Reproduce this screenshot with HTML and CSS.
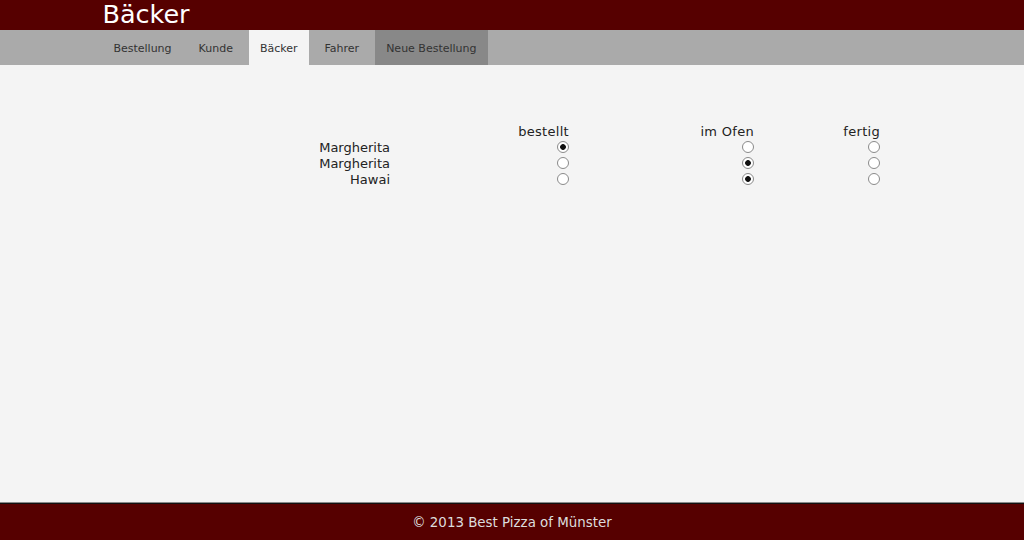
FILE: index.html
```
<!DOCTYPE html>
<html>
<head>
	<title>Bäcker</title>

	<link rel="stylesheet" href="styles.css">
</head>
<body>
	<div class="head">
		<h1>Bäcker</h1>
	</div>
	<div class="nav">
		<a href="#" class="tab">Bestellung</a>
		<a href="#" class="tab">Kunde</a>
		<a href="#" class="tab active">Bäcker</a>
		<a href="#" class="tab">Fahrer</a>
		<a href="#" class="tab new">Neue Bestellung</a>
	</div>
	<div class="main">
		<table class="orders">
			<tr>
				<th class="name"></th>
				<th class="c1">bestellt</th>
				<th class="c2">im Ofen</th>
				<th class="c3">fertig</th>
			</tr>
			<tr>
				<td>Margherita</td>
				<td><input type="radio" name="p1" value="bestellt" checked></td>
				<td><input type="radio" name="p1" value="ofen"></td>
				<td><input type="radio" name="p1" value="fertig"></td>
			</tr>
			<tr>
				<td>Margherita</td>
				<td><input type="radio" name="p2" value="bestellt"></td>
				<td><input type="radio" name="p2" value="ofen" checked></td>
				<td><input type="radio" name="p2" value="fertig"></td>
			</tr>
			<tr>
				<td>Hawai</td>
				<td><input type="radio" name="p3" value="bestellt"></td>
				<td><input type="radio" name="p3" value="ofen" checked></td>
				<td><input type="radio" name="p3" value="fertig"></td>
			</tr>
		</table>
	</div>
	<div class="footer">
		&copy; 2013 Best Pizza of Münster
	</div>
</body>
</html>
```
FILE: styles.css
```
html, body{
	height: 100%;
}
body{
	margin: 0;
	background: #f4f4f4;
	font-family: "DejaVu Sans", Verdana, sans-serif;
	color: #222;
	display: flex;
	flex-direction: column;
}
.head{
	background: #560000;
	height: 30px;
	padding: 0 10%;
}
.head h1{
	margin: 0;
	color: white;
	font-weight: normal;
	font-size: 25.5px;
	line-height: 30px;
	position: relative;
	top: -1px;
}
.nav{
	background: #aaaaaa;
	height: 35px;
	padding: 0 10%;
	display: flex;
	gap: 5px;
}
a{
	text-decoration: none;
}
a.tab{
	color: #333;
	font-size: 11px;
	line-height: 37px;
	padding: 0 11px;
}
a.active{
	background: #f4f4f4;
}
a.new{
	background: #888888;
}
.main{
	flex: 1;
	padding-top: 59px;
}
.orders{
	border-collapse: collapse;
	margin-left: 102px;
	font-size: 13px;
}
.orders th, .orders td{
	padding: 0;
	text-align: right;
	font-weight: normal;
	line-height: 16px;
	height: 16px;
}
.orders th{
	letter-spacing: 0.3px;
}
.orders .name{ width: 288px; }
.orders .c1{ width: 179px; }
.orders .c2{ width: 185px; }
.orders .c3{ width: 126px; }
input[type="radio"]{
	appearance: none;
	-webkit-appearance: none;
	margin: 0;
	width: 12px;
	height: 12px;
	border: 1px solid #8a8a8a;
	border-radius: 50%;
	background: #fff;
	vertical-align: middle;
	position: relative;
	top: -2px;
}
input[type="radio"]:checked{
	background: radial-gradient(circle, #111 0, #111 2.5px, #fff 3.2px);
}
.footer{
	background: #560000;
	height: 36px;
	border-top: 1px solid #111;
	box-shadow: 0 -1px 0 #8a8a8a;
	color: #ddd;
	font-size: 13.4px;
	line-height: 37px;
	text-align: center;
}
```
